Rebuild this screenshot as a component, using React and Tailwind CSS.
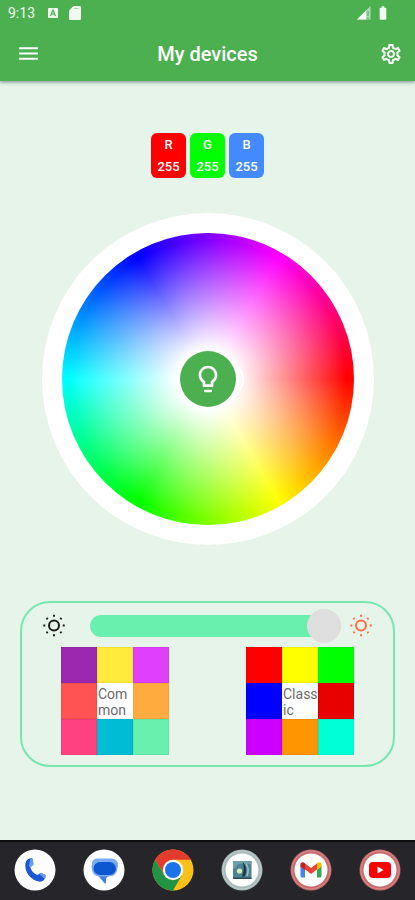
import React, { useState } from 'react';
import { MdMenu, MdOutlineSettings, MdLightbulbOutline, MdBatteryFull } from 'react-icons/md';

const channels = [
  { name: 'R', value: 255, color: 'bg-[#ff0000]' },
  { name: 'G', value: 255, color: 'bg-[#00ff00]' },
  { name: 'B', value: 255, color: 'bg-[#448aff]' },
];

const palettes = [
  {
    name: 'Common',
    before: ['bg-[#9c27b0]', 'bg-[#ffeb3b]', 'bg-[#e040fb]', 'bg-[#ff5252]'],
    after: ['bg-[#ffab40]', 'bg-[#ff4081]', 'bg-[#00bcd4]', 'bg-[#69f0ae]'],
  },
  {
    name: 'Classic',
    before: ['bg-[#ff0000]', 'bg-[#ffff00]', 'bg-[#00ff00]', 'bg-[#0000ff]'],
    after: ['bg-[#e60000]', 'bg-[#cc00ff]', 'bg-[#ff9500]', 'bg-[#00ffd5]'],
  },
];

const SunIcon = ({ className }) => (
  <svg viewBox="0 0 24 24" className={`w-6 h-6 shrink-0 ${className}`} fill="none" stroke="currentColor" strokeWidth="2">
    <circle cx="12" cy="11.500" r="5" />
    <path
      d="M12 .8v2M12 20.200v2M1.300 11.500h2M20.700 11.500h2M4.500 4l1.200 1.200M18.300 17.800l1.200 1.200M4.500 19l1.200-1.200M18.300 5.200l1.200-1.200"
      strokeWidth="2"
    />
  </svg>
);

const PhoneLogo = () => (
  <svg viewBox="0 0 42 42" className="w-[42px] h-[42px]">
    <circle cx="21" cy="21" r="20.500" fill="#fff" />
    <path d="M14.200 10c1.500-1 3-1 4.300-.4l1 5.900-3.200 2.700c.9 3.600 3.600 6.300 7.200 7.800l3.300-2.200 4.700 2.300c.4 2.400-.5 4.400-2.500 5.700-2 1.200-4.500 1-7 0C16 29.300 11.300 23.500 11.300 16.500c0-2.600.9-5 2.900-6.500z" fill="#1a56d6" />
    <path d="M16.500 9.300c.8-.1 1.500 0 2 .3l1 5.900-3.200 2.700-1.500-1.200zM25.300 25l1.500-1.200 4.700 2.300c.2 1.400-.1 2.700-.8 3.800z" fill="#6b9cf6" />
  </svg>
);

const MessagesLogo = () => (
  <svg viewBox="0 0 42 42" className="w-[42px] h-[42px]">
    <circle cx="21" cy="21" r="20.500" fill="#fff" />
    <path d="M14.500 9.500h14a6.500 6.500 0 0 1 5.800 9.500c-.2 5.500-3.300 8.500-8.300 8.500H17c-5 0-8-3.500-8.200-8a5 5 0 0 1 .2-4C8.500 12 11 9.500 14.500 9.500z" fill="#7baaf7" />
    <rect x="10.500" y="13" width="22.500" height="13" rx="6.500" fill="#0b57d0" />
    <path d="M15.500 27.300H26c-2 .7-3 1.600-3 3v3.400c0 .7-.7 1-1.300.5z" fill="#3f7ee8" />
  </svg>
);

const ChromeLogo = () => (
  <svg viewBox="0 0 42 42" className="w-[42px] h-[42px]">
    <circle cx="21" cy="21" r="20.500" fill="#fbc116" />
    <path d="M3.250 10.750a20.500 20.500 0 0 1 35.500 0H21l-8.700 15.250z" fill="#e33b2e" />
    <path d="M12.200 26.100 3.250 10.750A20.500 20.500 0 0 0 21 41.500l8.900-15.300z" fill="#229342" />
    <circle cx="21" cy="21" r="10.200" fill="#fff" />
    <circle cx="21" cy="21" r="8" fill="#1a73e8" />
  </svg>
);

const LampLogo = () => (
  <svg viewBox="0 0 42 42" className="w-[42px] h-[42px]">
    <circle cx="21" cy="21" r="20.500" fill="#a9b8b9" />
    <circle cx="21" cy="21" r="19" fill="none" stroke="#c3cdce" strokeWidth="1" />
    <circle cx="21" cy="21" r="16.500" fill="#fff" />
    <rect x="12" y="12" width="18.500" height="18" fill="#4e8492" />
    <path d="M12 12h18.500v3H23c-4-1-7 0-9 4l-2 1z" fill="#6f9fa8" />
    <path d="M12 28.500h18.500V30H12z" fill="#274a5a" />
    <path d="M21.500 13c4 3 4.500 10 2 14.500h-2.500c2-5 2.500-9.500.5-14.500z" fill="#1b3342" />
    <path d="M25 15c2.500 3 2.500 8 1 12" fill="none" stroke="#9cc3c8" strokeWidth="1.500" />
    <circle cx="18.500" cy="22" r="2.600" fill="#d5efbd" />
  </svg>
);

const GmailLogo = () => (
  <svg viewBox="0 0 42 42" className="w-[42px] h-[42px]">
    <circle cx="21" cy="21" r="20.500" fill="#c9696b" />
    <circle cx="21" cy="21" r="19" fill="none" stroke="#d98f90" strokeWidth="1" />
    <circle cx="21" cy="21" r="16.500" fill="#fff" />
    <path d="M10.500 15.500V27a1.500 1.500 0 0 0 1.500 1.500h3V19z" fill="#4285f4" />
    <path d="M27 19v9.500h3a1.500 1.500 0 0 0 1.500-1.500V15.500z" fill="#34a853" />
    <path d="M14.500 14v6l6.500 5 6.500-5v-6L21 19z" fill="#ea4335" />
    <path d="M10.500 15.500v2L15 20.900v-6.500l-.7-.6c-1.600-1.200-3.800-.1-3.800 1.700z" fill="#c5221f" />
    <path d="M31.500 15.500v2L27 20.900v-6.500l.7-.6c1.600-1.200 3.800-.1 3.800 1.700z" fill="#fbbc04" />
  </svg>
);

const YoutubeLogo = () => (
  <svg viewBox="0 0 42 42" className="w-[42px] h-[42px]">
    <circle cx="21" cy="21" r="20.500" fill="#c9696b" />
    <circle cx="21" cy="21" r="19" fill="none" stroke="#d98f90" strokeWidth="1" />
    <circle cx="21" cy="21" r="16.500" fill="#fff" />
    <rect x="10" y="13" width="22" height="16" rx="4" fill="#ff0000" />
    <path d="M18.500 17.500v7l6-3.500z" fill="#fff" />
  </svg>
);

const apps = [
  { name: 'Phone', Logo: PhoneLogo },
  { name: 'Messages', Logo: MessagesLogo },
  { name: 'Chrome', Logo: ChromeLogo },
  { name: 'Lamp', Logo: LampLogo },
  { name: 'Gmail', Logo: GmailLogo },
  { name: 'YouTube', Logo: YoutubeLogo },
];

const Palette = ({ palette }) => (
  <div className="grid grid-cols-[repeat(3,36px)] auto-rows-[36px]">
    {palette.before.map((color) => (
      <button key={color} aria-label={`${palette.name} color`} className={`border border-black/5 ${color}`} />
    ))}
    <div className="bg-white text-sm leading-4 text-[#6b6b6b] break-all pt-[3px] pl-px">{palette.name}</div>
    {palette.after.map((color) => (
      <button key={color} aria-label={`${palette.name} color`} className={`border border-black/5 ${color}`} />
    ))}
  </div>
);

const App = () => {
  const [brightness, setBrightness] = useState(100);

  return (
    <div className="min-h-screen flex flex-col bg-[#e6f4e9] font-[Roboto,sans-serif]">

      {/* Header */}
      <header className="bg-[#4caf50] text-white shadow-[0_1px_4px_rgba(0,0,0,0.45)]">
        <div className="h-[26px] flex items-center justify-between pl-2 pr-6 text-[#f1f9f1]">
          <div className="flex items-center">
            <span className="text-sm leading-5">9:13</span>
            <svg viewBox="0 0 12 12" className="w-3 h-3 ml-3">
              <rect x="1" y="1" width="10" height="10" rx="1" fill="currentColor" />
              <path d="M3.500 9 6 3l2.500 6M4.500 7h3" fill="none" stroke="#4caf50" strokeWidth="1.200" />
            </svg>
            <svg viewBox="0 0 12 14" className="w-3 h-3.5 ml-2.5">
              <path d="M4.500 0H11a1 1 0 0 1 1 1v12a1 1 0 0 1-1 1H1a1 1 0 0 1-1-1V4.500z" fill="currentColor" />
              <path d="M5 2h4.500v1H5z" fill="#a9d8ab" />
            </svg>
          </div>
          <div className="flex items-center gap-1">
            <svg viewBox="0 0 14 14" className="w-3.5 h-3.5">
              <path d="M13.500 0v13.500H0z" fill="currentColor" opacity="0.6" />
              <path d="M9 4.500v9H0z" fill="currentColor" />
              <path d="M11 5v5M11 11.500V13" stroke="#4caf50" strokeWidth="1.200" />
            </svg>
            <MdBatteryFull className="w-4 h-4" />
          </div>
        </div>
        <div className="h-[55px] flex items-center justify-between px-2">
          <button aria-label="Menu" className="w-10 flex justify-center">
            <MdMenu size={25} />
          </button>
          <h1 className="text-xl font-medium">My devices</h1>
          <button aria-label="Settings" className="w-10 pr-1 flex justify-end">
            <MdOutlineSettings size={24} />
          </button>
        </div>
      </header>

      <main>
        {/* Channel values */}
        <div className="flex justify-center gap-1 mt-[52px]">
          {channels.map((c) => (
            <div
              key={c.name}
              className={`w-[35px] h-[45px] rounded-md text-center text-[13px] leading-[22px] pt-px font-medium text-white ${c.color}`}
            >
              <div>{c.name}</div>
              <div>{c.value}</div>
            </div>
          ))}
        </div>

        {/* Color wheel */}
        <div className="w-4/5 aspect-square mx-auto mt-[35px] p-5 rounded-full bg-white">
          <div className="relative w-full h-full rounded-full flex items-center justify-center bg-[radial-gradient(closest-side,#fff_20%,rgba(255,255,255,0)_95%),conic-gradient(from_90deg,#f00,#ff0,#0f0,#0ff,#00f,#f0f,#f00)]">
            {/* Picker handle, mostly hidden behind the bulb */}
            <div className="absolute left-1/2 top-1/2 -translate-y-1/2 w-9 h-9 rounded-full border-2 border-white" />
            <button
              aria-label="Toggle light"
              className="relative w-14 h-14 rounded-full bg-[#4caf50] text-white flex items-center justify-center"
            >
              <MdLightbulbOutline size={32} />
            </button>
          </div>
        </div>

        {/* Brightness and palettes */}
        <section className="mx-5 mt-14 h-[166px] border-2 border-[#76e8af] rounded-[30px] pt-[6px]">
          <div className="flex items-center px-5">
            <SunIcon className="text-[#1c1c1c]" />
            <input
              type="range"
              aria-label="Brightness"
              min="0"
              max="100"
              value={brightness}
              onChange={(e) => setBrightness(Number(e.target.value))}
              className="appearance-none flex-1 min-w-0 h-[34px] ml-6 mr-2 bg-transparent [&::-webkit-slider-runnable-track]:h-[22px] [&::-webkit-slider-runnable-track]:rounded-full [&::-webkit-slider-runnable-track]:bg-[#69f0ae] [&::-webkit-slider-thumb]:appearance-none [&::-webkit-slider-thumb]:w-[34px] [&::-webkit-slider-thumb]:h-[34px] [&::-webkit-slider-thumb]:-mt-[6px] [&::-webkit-slider-thumb]:rounded-full [&::-webkit-slider-thumb]:bg-[#dedede]"
            />
            <SunIcon className="text-[#ff6e40]" />
          </div>
          <div className="flex justify-between px-[39px] mt-1">
            {palettes.map((p) => (
              <Palette key={p.name} palette={p} />
            ))}
          </div>
        </section>
      </main>

      {/* Dock */}
      <nav className="mt-auto h-[60px] bg-[#26262a] shadow-[inset_0_2px_0_#0c0f0d] grid grid-cols-6 items-center justify-items-center">
        {apps.map(({ name, Logo }) => (
          <a key={name} href="#" aria-label={name}>
            <Logo />
          </a>
        ))}
      </nav>

    </div>
  );
};

export default App;
